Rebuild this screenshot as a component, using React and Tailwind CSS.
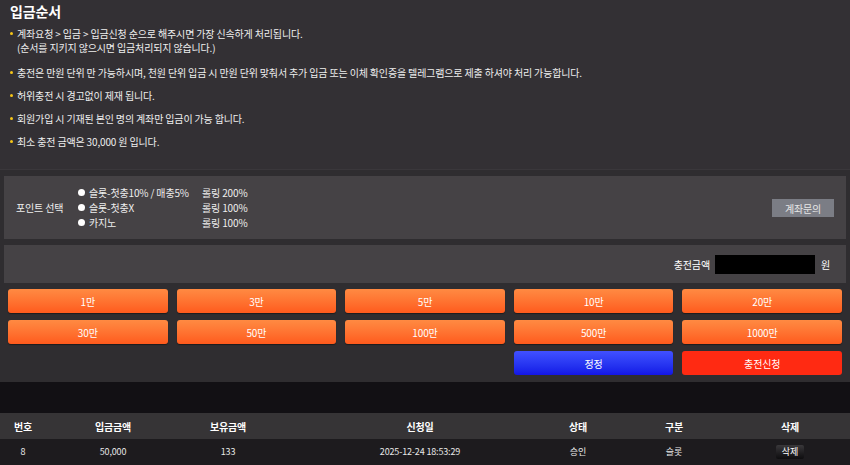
import React from "react";

const notices = [
  ["계좌요청 > 입금 > 입금신청 순으로 해주시면 가장 신속하게 처리됩니다.", "(순서를 지키지 않으시면 입금처리되지 않습니다.)"],
  ["충전은 만원 단위 만 가능하시며, 천원 단위 입금 시 만원 단위 맞춰서 추가 입금 또는 이체 확인증을 텔레그램으로 제출 하셔야 처리 가능합니다."],
  ["허위충전 시 경고없이 제재 됩니다."],
  ["회원가입 시 기재된 본인 명의 계좌만 입금이 가능 합니다."],
  ["최소 충전 금액은 30,000 원 입니다."],
];

const points = [
  ["슬롯-첫충10% / 매충5%", "롤링 200%"],
  ["슬롯-첫충X", "롤링 100%"],
  ["카지노", "롤링 100%"],
];

const amounts = ["1만", "3만", "5만", "10만", "20만", "30만", "50만", "100만", "500만", "1000만"];

const headers = ["번호", "입금금액", "보유금액", "신청일", "상태", "구분", "삭제"];

function OrangeButton({ children }) {
  return (
    <button className="h-[24px] rounded-[3px] bg-gradient-to-b from-[#ff8a42] to-[#ff5a1c] text-[10px] text-white shadow-[0_1px_1px_rgba(0,0,0,0.4)]">
      {children}
    </button>
  );
}

export default function App() {
  return (
    <div
      className="h-[465px] w-[850px] overflow-hidden bg-[#2f2d30] text-white tracking-[-0.15px]"
      style={{ fontFamily: '"Noto Sans CJK KR", "Noto Sans", sans-serif' }}
    >
      <section className="h-[170px] border-b border-[#3a373b] bg-[#333034] px-[10px] pt-[1px]">
        <h1 className="text-[14px] font-bold leading-[20px]">입금순서</h1>
        <ul className="mt-[6px] flex flex-col gap-[10px] text-[10px] leading-[13px] text-[#eeeeee]">
          {notices.map((lines, i) => (
            <li key={i} className={`flex ${i === 0 ? "mb-[2px]" : ""}`}>
              <span className="mr-[4px] mt-[5px] h-[3px] w-[3px] shrink-0 rounded-full bg-[#f5c518]" />
              <div className="flex flex-col gap-[1px]">
                {lines.map((l, j) => (
                  <span key={j} className="block h-[13px]">{l}</span>
                ))}
              </div>
            </li>
          ))}
        </ul>
      </section>

      <div className="px-[4px] pt-[6px]">
        <div className="flex h-[63px] items-center bg-[#454245] pl-[12px] pr-[12px] text-[10px] text-[#eeeeee]">
          <span className="w-[62px]">포인트 선택</span>
          <div className="flex flex-col">
            {points.map(([name, roll]) => (
              <div key={name} className="flex h-[15px] items-center">
                <span className="mr-[4px] h-[7px] w-[7px] rounded-full bg-white" />
                <span className="w-[113px]">{name}</span>
                <span>{roll}</span>
              </div>
            ))}
          </div>
          <button className="ml-auto mt-[1px] h-[18px] w-[62px] bg-[#7b7d85] text-[10px] text-[#e6e6e6]">
            계좌문의
          </button>
        </div>

        <div className="mt-[6px] flex h-[38px] items-center justify-end bg-[#454245] pr-[16px] text-[10px]">
          <span className="mr-[5px]">충전금액</span>
          <div className="h-[19px] w-[100px] bg-black" />
          <span className="ml-[6px]">원</span>
        </div>

        <div className="grid grid-cols-5 gap-x-[9px] gap-y-[7px] px-[4px] pt-[6px]">
          {amounts.map((a) => (
            <OrangeButton key={a}>{a}</OrangeButton>
          ))}
          <div />
          <div />
          <div />
          <button className="h-[24px] rounded-[3px] bg-gradient-to-b from-[#4150ff] to-[#1414e6] text-[10px] text-white">
            정정
          </button>
          <button className="h-[24px] rounded-[3px] bg-[#ff2a12] text-[10px] text-white">
            충전신청
          </button>
        </div>
      </div>

      <div className="mt-[7px] h-[31px] bg-[#121014]" />

      <div className="grid grid-cols-[46px_134px_96px_288px_28px_164px_68px_1fr] text-[10px]">
        {headers.map((h) => (
          <div key={h} className="flex h-[26px] items-center justify-center whitespace-nowrap bg-[#363436] font-bold">
            {h}
          </div>
        ))}
        <div className="h-[26px] bg-[#363436]" />
        {["8", "50,000", "133", "2025-12-24 18:53:29", "승인", "슬롯"].map((v, i) => (
          <div key={i} className="flex h-[26px] items-center justify-center whitespace-nowrap bg-[#1d1b1e] text-[9px] text-[#e8e8e8]">
            {v}
          </div>
        ))}
        <div className="flex h-[26px] items-center justify-center bg-[#1d1b1e]">
          <button className="h-[14px] w-[28px] rounded-[2px] bg-gradient-to-b from-[#3a383b] to-[#0e0d0f] text-[9px] text-white">
            삭제
          </button>
        </div>
        <div className="h-[26px] bg-[#1d1b1e]" />
      </div>
    </div>
  );
}
